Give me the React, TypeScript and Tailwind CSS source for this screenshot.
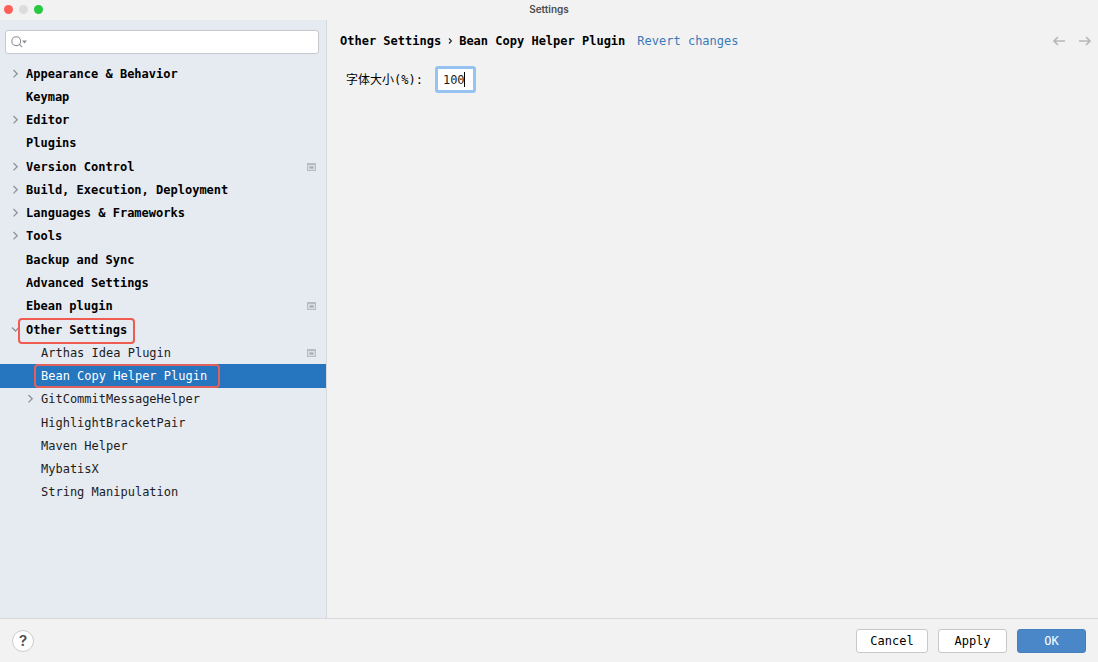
import { useState } from "react";

type Item = {
  label: string;
  level: 0 | 1;
  arrow?: "right" | "down";
  project?: boolean;
  selected?: boolean;
  mark?: "section" | "entry";
};

const items: Item[] = [
  { label: "Appearance & Behavior", level: 0, arrow: "right" },
  { label: "Keymap", level: 0 },
  { label: "Editor", level: 0, arrow: "right" },
  { label: "Plugins", level: 0 },
  { label: "Version Control", level: 0, arrow: "right", project: true },
  { label: "Build, Execution, Deployment", level: 0, arrow: "right" },
  { label: "Languages & Frameworks", level: 0, arrow: "right" },
  { label: "Tools", level: 0, arrow: "right" },
  { label: "Backup and Sync", level: 0 },
  { label: "Advanced Settings", level: 0 },
  { label: "Ebean plugin", level: 0, project: true },
  { label: "Other Settings", level: 0, arrow: "down", mark: "section" },
  { label: "Arthas Idea Plugin", level: 1, project: true },
  { label: "Bean Copy Helper Plugin", level: 1, selected: true, mark: "entry" },
  { label: "GitCommitMessageHelper", level: 1, arrow: "right" },
  { label: "HighlightBracketPair", level: 1 },
  { label: "Maven Helper", level: 1 },
  { label: "MybatisX", level: 1 },
  { label: "String Manipulation", level: 1 },
];

function Chevron({ dir }: { dir: "right" | "down" }) {
  return (
    <svg viewBox="0 0 10 10" className="size-[10px]" fill="none" stroke="#8f9297" strokeWidth="1.3" aria-hidden="true">
      <path d={dir === "right" ? "M3.5 1 L7.2 4.7 L3.5 8.4" : "M2 2.5 L5.5 6 L9 2.5"} />
    </svg>
  );
}

function ProjectIcon() {
  return (
    <svg viewBox="0 0 9 8" className="h-2 w-[9px]" aria-hidden="true">
      <rect x="0.5" y="0.5" width="8" height="7" fill="#d9dce2" stroke="#b8bbc0" />
      <rect x="0" y="0" width="9" height="2" fill="#b8bbc0" />
      <rect x="2.5" y="3.5" width="4" height="2" fill="#a6a9ae" />
    </svg>
  );
}

function Row({ item }: { item: Item }) {
  return (
    <li className={item.selected ? "bg-[#2675bf] text-white" : item.level === 0 ? "text-black" : "text-[#1c1c1c]"}>
      <button
        type="button"
        className={`flex h-full w-full items-center pr-[10px] text-left ${item.level === 0 ? "pl-[10px] font-bold" : "pl-[25px]"}`}
      >
        <span className="w-4 shrink-0">{item.arrow && <Chevron dir={item.arrow} />}</span>
        <span className="relative flex h-full items-center">
          {item.label}
          {item.mark === "section" && (
            <span className="absolute -inset-x-2 top-0 -bottom-[3px] rounded-[4px] border-2 border-[#f05a50] bg-transparent" />
          )}
          {item.mark === "entry" && (
            <span className="absolute -left-[7px] -right-[13px] inset-y-0 rounded-[4px] border-2 border-[#e0605f]" />
          )}
        </span>
        {item.project && (
          <span className="ml-auto">
            <ProjectIcon />
          </span>
        )}
      </button>
    </li>
  );
}

function Arrow({ back }: { back?: boolean }) {
  return (
    <svg viewBox="0 0 12 10" className="h-[10px] w-3" fill="none" stroke="#b8b8b8" strokeWidth="1.6" aria-hidden="true">
      <path d={back ? "M12 5 H1 M5 1 L1 5 L5 9" : "M0 5 H11 M7 1 L11 5 L7 9"} />
    </svg>
  );
}

export default function App() {
  const [query, setQuery] = useState("");
  const [size, setSize] = useState("100");

  return (
    <div className="flex min-h-screen flex-col bg-[#f2f2f2] font-['DejaVu_Sans_Mono','Noto_Sans_CJK_SC',monospace] text-[12px] leading-4 text-black">
      <header className="grid h-5 grid-cols-[1fr_auto_1fr] items-center bg-[#f2f2f2] px-1 pb-[2px]">
        <div className="flex gap-[6px]">
          <span className="size-[9px] rounded-full bg-[#fe5f57]" />
          <span className="size-[9px] rounded-full bg-[#dcdcdc]" />
          <span className="size-[9px] rounded-full bg-[#28c83f]" />
        </div>
        <h1 className="font-[Inter,sans-serif] text-[10px] font-semibold text-[#4d4d4d]">Settings</h1>
      </header>

      <div className="flex flex-1">
        <nav className="w-[327px] shrink-0 border-r border-[#d5d8dd] bg-[#e6eaf1]">
          <div className="pt-[10px] pr-[7px] pb-2 pl-[5px]">
            <label className="flex h-6 items-center rounded-[3px] border border-[#c6c9ce] bg-white pl-[5px]">
              <svg viewBox="0 0 17 12" className="h-3 w-[17px] shrink-0" fill="none" stroke="#8d9095" strokeWidth="1.1" aria-hidden="true">
                <circle cx="5.2" cy="5.2" r="4.4" />
                <path d="M8.4 8.4 L11.2 11.2" />
                <path d="M11 4.6 H16 L13.5 7.4 Z" fill="#8d9095" stroke="none" />
              </svg>
              <input
                type="text"
                aria-label="Search settings"
                value={query}
                onChange={(e) => setQuery(e.target.value)}
                className="min-w-0 flex-1 px-1 outline-none"
              />
            </label>
          </div>
          <ul className="grid min-h-[442px] auto-rows-fr">
            {items.map((item) => (
              <Row key={item.label} item={item} />
            ))}
          </ul>
        </nav>

        <main className="flex-1 pt-[13px] pr-[7px] pl-[13px]">
          <div className="flex items-center">
            <h2 className="flex items-center gap-[6px] font-bold">
              <span>Other Settings</span>
              <svg viewBox="0 0 6 8" className="h-2 w-[6px]" fill="none" stroke="#222222" strokeWidth="1.1" aria-hidden="true">
                <path d="M2 1.5 L4.4 4 L2 6.5" />
              </svg>
              <span>Bean Copy Helper Plugin</span>
            </h2>
            <a href="#revert" className="ml-3 text-[#3a7ab8]">
              Revert changes
            </a>
            <div className="ml-auto flex gap-[14px]">
              <button type="button" aria-label="Back">
                <Arrow back />
              </button>
              <button type="button" aria-label="Forward">
                <Arrow />
              </button>
            </div>
          </div>
          <div className="mt-[17px] flex items-center pl-[6px]">
            <label htmlFor="font-size">字体大小(%):</label>
            <div className="relative ml-3">
              <input
                id="font-size"
                type="text"
                value={size}
                onChange={(e) => setSize(e.target.value)}
                className="block h-[27px] w-[41px] rounded-[3px] border-3 border-[#97c3f3] bg-white pl-[5px] text-[#1c1c1c] outline-none"
              />
              <span className="absolute top-[6px] left-[29px] h-[15px] w-px bg-black" />
            </div>
          </div>
        </main>
      </div>

      <footer className="flex h-11 items-center border-t border-[#d9d9d9] bg-[#f2f2f2] px-3">
        <button
          type="button"
          aria-label="Help"
          className="flex size-[22px] items-center justify-center rounded-full border border-[#cccccc] bg-white font-[Inter,sans-serif] text-[15px] font-semibold text-[#4d4d4d]"
        >
          ?
        </button>
        <div className="ml-auto flex gap-[10px]">
          <button type="button" className="h-6 w-[72px] rounded-[3px] border border-[#c8c8c8] bg-white">
            Cancel
          </button>
          <button type="button" className="h-6 w-[69px] rounded-[3px] border border-[#c8c8c8] bg-white">
            Apply
          </button>
          <button type="button" className="h-6 w-[69px] rounded-[3px] border border-[#4580bd] bg-[#4a87c9] text-white">
            OK
          </button>
        </div>
      </footer>
    </div>
  );
}
